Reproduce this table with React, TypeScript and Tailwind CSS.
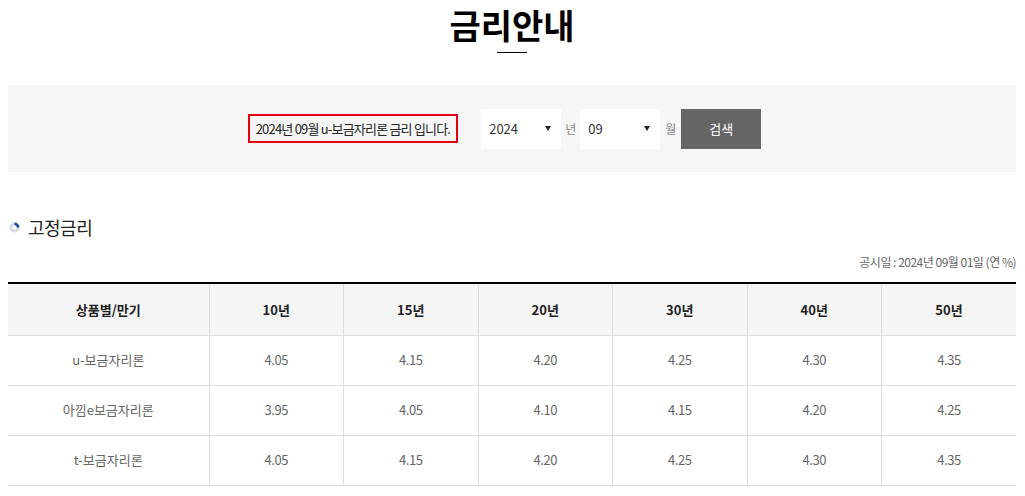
import { useState } from 'react';

const years = ['10년', '15년', '20년', '30년', '40년', '50년'];

const rows = [
  { name: 'u-보금자리론', rates: ['4.05', '4.15', '4.20', '4.25', '4.30', '4.35'] },
  { name: '아낌e보금자리론', rates: ['3.95', '4.05', '4.10', '4.15', '4.20', '4.25'] },
  { name: 't-보금자리론', rates: ['4.05', '4.15', '4.20', '4.25', '4.30', '4.35'] },
];

function SelectBox({ value, width }: { value: string; width: string }) {
  return (
    <div className={`flex h-10 ${width} items-center justify-between bg-white pl-2 pr-2.5 text-[13px] text-[#333]`}>
      <span>{value}</span>
      <svg width="6" height="5" viewBox="0 0 6 5">
        <path d="M0 0 H6 L3 5 Z" fill="#222" />
      </svg>
    </div>
  );
}

export default function App() {
  const [year] = useState('2024');
  const [month] = useState('09');

  return (
    <div
      className="min-h-[496px] bg-white pl-2 pr-[9px] text-[#333]"
      style={{ fontFamily: '"Noto Sans CJK KR", "Noto Sans", sans-serif' }}
    >
      <div className="flex flex-col items-center pt-[2px]">
        <h1 className="text-[34px] font-bold leading-[46px] text-black">금리안내</h1>
        <div className="mt-[4px] h-px w-[30px] bg-black" />
      </div>

      <div className="mt-[32px] flex h-[87px] items-center justify-center bg-[#f6f6f6] pr-[15px]">
        <div className="flex h-[29px] items-center border-2 border-[#e60012] px-[6px] text-[13px] tracking-[-0.8px] text-[#222]">
          2024년 09월 u-보금자리론 금리 입니다.
        </div>
        <div className="ml-[23px] flex items-center">
          <SelectBox value={year} width="w-20" />
          <span className="ml-[4px] mr-[4px] text-[12px] text-[#888]">년</span>
          <SelectBox value={month} width="w-20" />
          <span className="ml-[5px] mr-[5px] text-[12px] text-[#888]">월</span>
          <button className="h-10 w-20 bg-[#666] text-[13px] text-white">검색</button>
        </div>
      </div>

      <div className="mt-[42px] flex items-center gap-[8px] pl-px">
        <svg width="11" height="11" viewBox="0 0 12 12">
          <circle cx="6" cy="6" r="4" fill="none" stroke="#d5d8e0" strokeWidth="3" />
          <path d="M6 2 A4 4 0 0 1 10 6" fill="none" stroke="#1d4ea3" strokeWidth="3" />
        </svg>
        <h2 className="text-[18px] leading-[26px] tracking-[-0.5px] text-[#222]">고정금리</h2>
      </div>

      <p className="mt-[13px] text-right text-[12px] tracking-[-0.5px] text-[#666]">
        공시일 : 2024년 09월 01일 (연 %)
      </p>

      <table className="mt-[11px] w-full table-fixed border-collapse border-t-2 border-t-black text-[13px]">
        <colgroup>
          <col className="w-[201px]" />
          {years.map((y) => (
            <col key={y} />
          ))}
        </colgroup>
        <thead>
          <tr className="h-[52px] bg-[#f5f5f5]">
            <th className="border-b border-[#ddd] font-bold text-[#222]">상품별/만기</th>
            {years.map((y) => (
              <th key={y} className="border-b border-l border-[#ddd] font-bold text-[#222]">
                {y}
              </th>
            ))}
          </tr>
        </thead>
        <tbody>
          {rows.map((r) => (
            <tr key={r.name} className="h-[50px]">
              <td className="border-b border-[#ddd] text-center text-[#666]">{r.name}</td>
              {r.rates.map((v, i) => (
                <td key={i} className="border-b border-l border-[#ddd] text-center tracking-[-0.5px] text-[#666]">
                  {v}
                </td>
              ))}
            </tr>
          ))}
        </tbody>
      </table>
    </div>
  );
}
